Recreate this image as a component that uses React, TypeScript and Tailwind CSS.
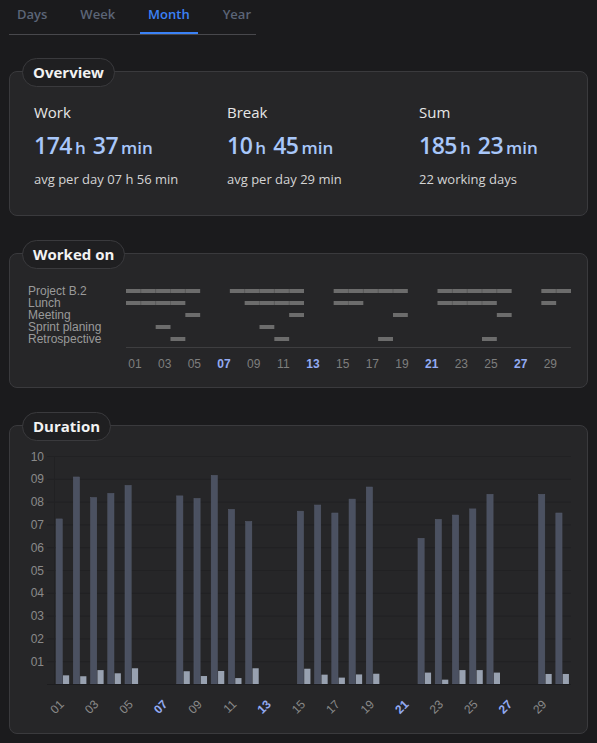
import React from "react";

const work: Record<number, number> = {
  1: 7.24, 2: 9.08, 3: 8.18, 4: 8.36, 5: 8.71,
  8: 8.25, 9: 8.14, 10: 9.15, 11: 7.66, 12: 7.13,
  15: 7.58, 16: 7.85, 17: 7.5, 18: 8.11, 19: 8.64,
  22: 6.39, 23: 7.22, 24: 7.41, 25: 7.68, 26: 8.32,
  29: 8.32, 30: 7.5,
};
const brk: Record<number, number> = {
  1: 0.38, 2: 0.34, 3: 0.61, 4: 0.47, 5: 0.69,
  8: 0.56, 9: 0.35, 10: 0.57, 11: 0.26, 12: 0.69,
  15: 0.67, 16: 0.41, 17: 0.28, 18: 0.42, 19: 0.45,
  22: 0.5, 23: 0.19, 24: 0.61, 25: 0.61, 26: 0.5,
  29: 0.44, 30: 0.44,
};
const weekend = [6, 7, 13, 14, 20, 21, 27, 28];

const range = (a: number, b: number) => Array.from({ length: b - a + 1 }, (_, i) => a + i);

const rows: { name: string; days: number[] }[] = [
  { name: "Project B.2", days: [...range(1, 5), ...range(8, 12), ...range(15, 19), ...range(22, 26), 29, 30] },
  { name: "Lunch", days: [...range(1, 4), ...range(9, 12), 15, 16, ...range(22, 25), 29] },
  { name: "Meeting", days: [5, 12, 19, 26] },
  { name: "Sprint planing", days: [3, 10] },
  { name: "Retrospective", days: [4, 11, 18, 25] },
];

const labels = range(1, 30).filter((d) => d % 2 === 1);
const pad = (n: number) => (n < 10 ? "0" + n : "" + n);
const chartFont = "'Liberation Sans', Arial, sans-serif";

function Section({ title, className, children }: { title: string; className: string; children: React.ReactNode }) {
  return (
    <div className={"relative rounded-[8px] border border-[#3a3a3d] bg-[#262628] " + className}>
      <div className="absolute -top-[14px] left-[12px] flex h-[29px] items-center rounded-full border border-[#3a3a3d] bg-[#1f1f21] px-[10px] text-[15px] font-bold leading-none text-[#f2f2f2]">
        {title}
      </div>
      {children}
    </div>
  );
}

function Stat({ label, a, b, sub }: { label: string; a: string; b: string; sub: string }) {
  return (
    <div className="flex flex-col">
      <div className="text-[15px] leading-[20px] text-[#e6e6e6]">{label}</div>
      <div className="mt-[9px] flex items-baseline text-[#a8c7fa] font-semibold leading-[28px]">
        <span className="text-[23px] tracking-[-0.5px]">{a}</span>
        <span className="ml-[3px] text-[17px]">h</span>
        <span className="ml-[7px] text-[23px] tracking-[-0.5px]">{b}</span>
        <span className="ml-[3px] text-[17px]">min</span>
      </div>
      <div className="mt-[8px] text-[13px] leading-[18px] text-[#d4d4d4]">{sub}</div>
    </div>
  );
}

function WorkedOnChart() {
  const x0 = 116;
  const dw = 14.833;
  return (
    <svg width="576" height="133" className="block">
      {rows.map((r, i) => (
        <g key={r.name}>
          <text x={18} y={41 + i * 12} fontSize="12" fill="#9a9a9a" fontFamily={chartFont}>
            {r.name}
          </text>
          {r.days.map((d) => (
            <rect key={d} x={x0 + (d - 1) * dw} y={35 + i * 12} width={dw} height={4} fill="#6c6c6c" />
          ))}
          {r.days.map((d) =>
            r.days.includes(d - 1) ? (
              <rect key={"s" + d} x={x0 + (d - 1) * dw - 0.5} y={35 + i * 12} width={1} height={4} fill="#5c5c5c" />
            ) : null
          )}
        </g>
      ))}
      <rect x={x0} y={93} width={30 * dw} height={1} fill="#3e3e40" />
      {labels.map((d) => (
        <text
          key={d}
          x={x0 + (d - 0.5) * dw + 1.6}
          y={114}
          fontSize="12"
          textAnchor="middle"
          fontFamily={chartFont}
          fill={weekend.includes(d) ? "#93abf3" : "#7e7e7e"}
          fontWeight={weekend.includes(d) ? 700 : 400}
        >
          {pad(d)}
        </text>
      ))}
    </svg>
  );
}

function DurationChart() {
  const base = 258;
  const unit = 22.8;
  const px0 = 44;
  const px1 = 561;
  const sw = (px1 - px0) / 30;
  const bw = sw * 0.8 * 0.5 * 0.9;
  return (
    <svg width="576" height="307" className="block">
      {range(1, 10).map((k) => {
        const y = base - k * unit;
        return (
          <g key={k}>
            <rect x={37} y={y} width={px1 - 37} height={1} fill="#212123" />
            <text x={34} y={y + 4.5} fontSize="12" textAnchor="end" fill="#8a8a8a" fontFamily={chartFont}>
              {pad(k)}
            </text>
          </g>
        );
      })}
      <rect x={px0} y={base - 10 * unit} width={1} height={10 * unit} fill="#212123" />
      {range(1, 30).map((d) => {
        const s = px0 + (d - 1) * sw;
        const c1 = s + sw * 0.1 + sw * 0.2;
        const c2 = s + sw * 0.5 + sw * 0.2;
        return (
          <g key={d}>
            {work[d] ? (
              <rect x={c1 - bw / 2} y={base - work[d] * unit} width={bw} height={work[d] * unit} fill="#4b5161" stroke="#555b6b" strokeWidth={0.5} />
            ) : null}
            {brk[d] ? (
              <rect x={c2 - bw / 2} y={base - brk[d] * unit} width={bw} height={brk[d] * unit} fill="#98a1b0" />
            ) : null}
          </g>
        );
      })}
      <rect x={37} y={base} width={px1 - 37} height={1} fill="#1d1d1f" />
      {labels.map((d) => {
        const cx = px0 + (d - 0.5) * sw + 2.2;
        const cy = 279;
        return (
          <text
            key={d}
            x={cx}
            y={cy}
            fontSize="12"
            textAnchor="end"
            fontFamily={chartFont}
            transform={`rotate(-45 ${cx} ${cy})`}
            fill={weekend.includes(d) ? "#93abf3" : "#8a8a8a"}
            fontWeight={weekend.includes(d) ? 700 : 400}
          >
            {pad(d)}
          </text>
        );
      })}
    </svg>
  );
}

export default function App() {
  return (
    <div
      className="min-h-[743px] w-[597px] bg-[#1b1b1d] pb-[9px]"
      style={{ fontFamily: "'Open Sans', 'Noto Sans', sans-serif" }}
    >
      <div className="ml-[9px] flex w-[247px] gap-[17px] border-b border-[#48484c]">
        {["Days", "Week", "Month", "Year"].map((t) => (
          <div
            key={t}
            className={
              "h-[34px] px-[8px] text-[13px] font-semibold leading-[28px] " +
              (t === "Month" ? "border-b-2 border-[#3b82f6] text-[#3b82f6]" : "text-[#5b6577]")
            }
          >
            {t}
          </div>
        ))}
      </div>

      <div className="mx-[9px] flex flex-col gap-[37px] pt-[36px]">
        <Section title="Overview" className="h-[145px]">
          <div className="grid grid-cols-[193px_192px_1fr] pl-[24px] pt-[30px]">
            <Stat label="Work" a="174" b="37" sub="avg per day 07 h 56 min" />
            <Stat label="Break" a="10" b="45" sub="avg per day 29 min" />
            <Stat label="Sum" a="185" b="23" sub="22 working days" />
          </div>
        </Section>

        <Section title="Worked on" className="h-[135px]">
          <WorkedOnChart />
        </Section>

        <Section title="Duration" className="h-[309px]">
          <DurationChart />
        </Section>
      </div>
    </div>
  );
}
